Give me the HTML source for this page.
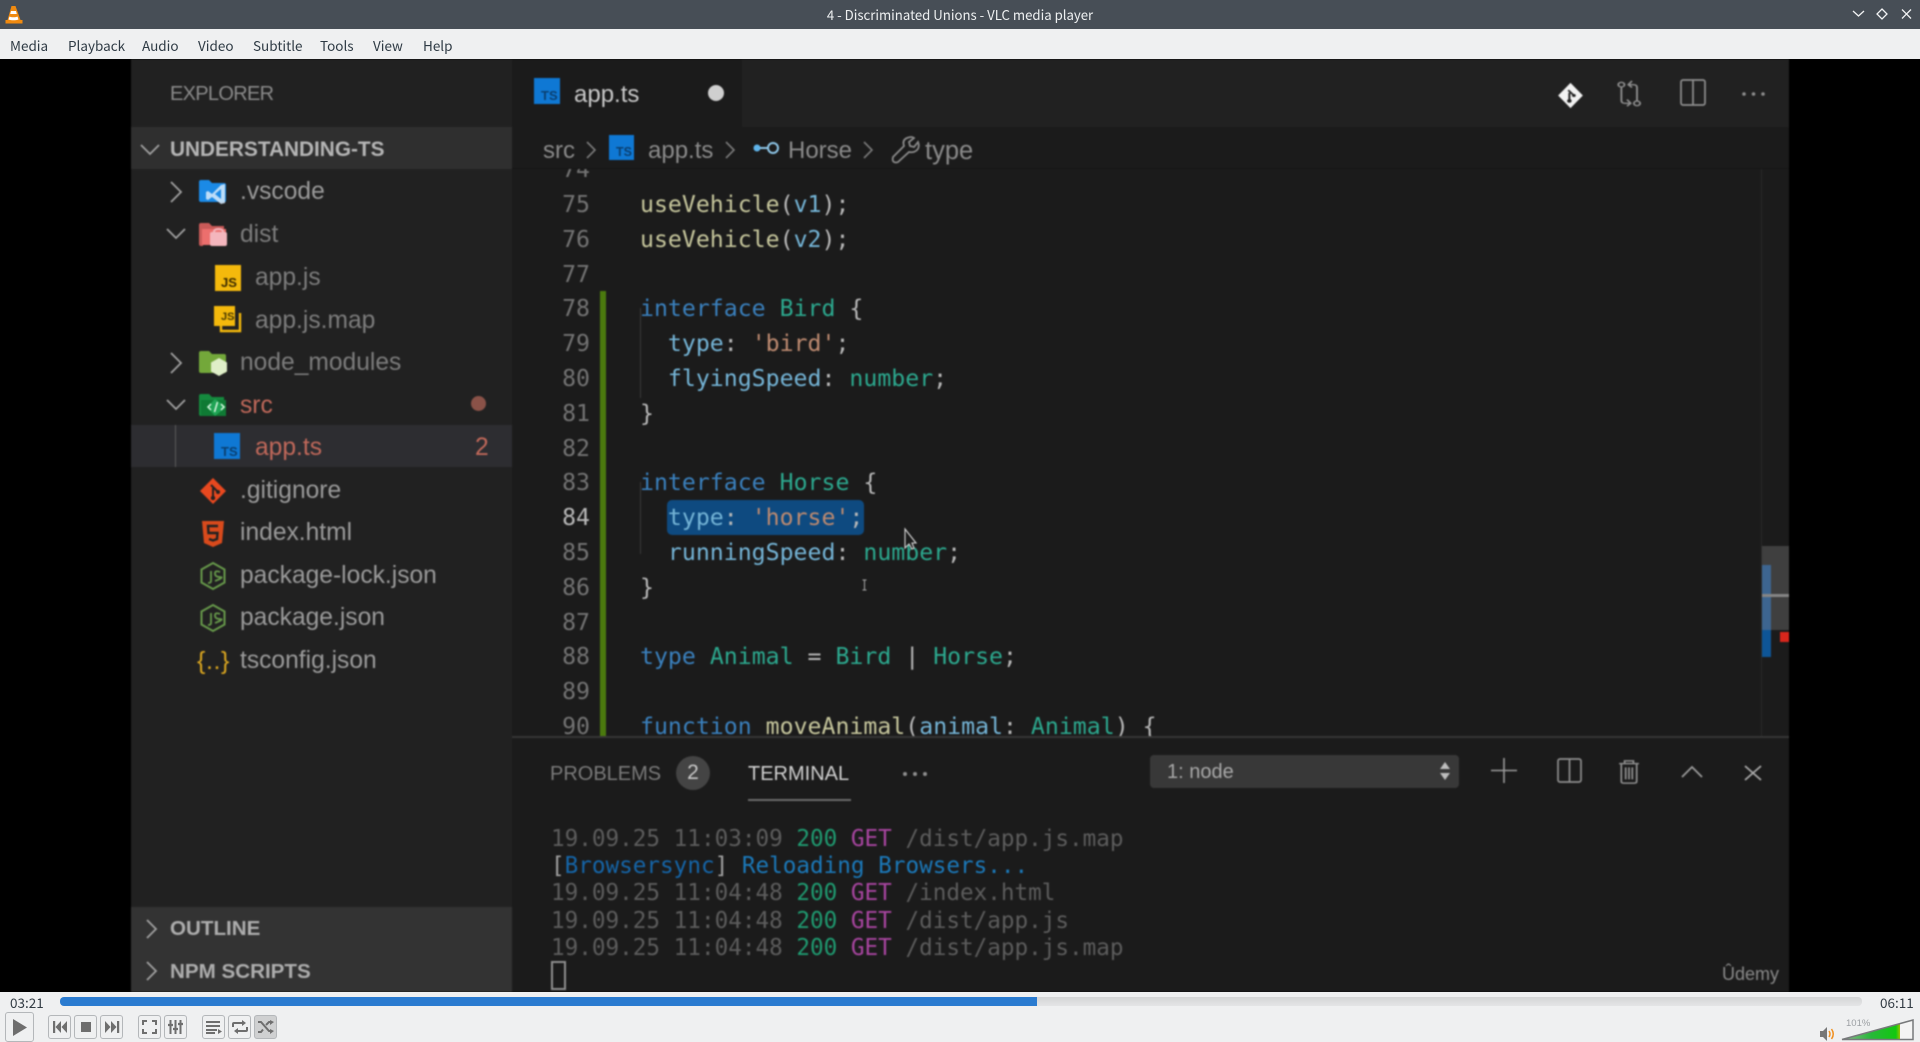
<!DOCTYPE html>
<html><head><meta charset="utf-8"><title>4 - Discriminated Unions - VLC media player</title>
<style>
html,body{margin:0;padding:0;background:#eff0f1;overflow:hidden}
body{width:1920px;height:1042px;position:relative;font-family:"Liberation Sans",sans-serif}
div,span.a,svg.a{position:absolute}
svg{position:absolute;overflow:visible}
.t{position:absolute;white-space:pre;line-height:40px;height:40px}
#inner .t,#inner>svg{transform:translateY(1px)}
#title{left:0;top:0;width:1920px;height:29px;background:#474e56}
#menu{left:0;top:29px;width:1920px;height:30px;background:#eff0f1}
.m{position:absolute;top:1px;line-height:30px;font-size:13.500px;color:#2e3a44;font-family:"Noto Sans CJK JP","Liberation Sans",sans-serif;white-space:pre}
#vid{left:0;top:59px;width:1920px;height:933px;background:#000;overflow:hidden}
#inner{left:0;top:-59px;width:1920px;height:1042px;filter:blur(.7px)}
.f{font-size:24.600px;color:#9a9a9a}
.code{font-family:"DejaVu Sans Mono","Liberation Mono",monospace;font-size:23.200px;line-height:34.800px;white-space:pre;color:#b8b8b8}
.fn{color:#c6c69c}.v{color:#74b4d6}.k{color:#3a80bd}.ty{color:#2ca88e}.s{color:#bd8a70}
.term{font-family:"DejaVu Sans Mono","Liberation Mono",monospace;font-size:22.650px;line-height:27.200px;white-space:pre;color:#5c5c5c}
.g{color:#1f9a70}.p{color:#a845a0}.b{color:#1b78b8}
.btn{position:absolute;top:1015px;width:23px;height:24px;box-sizing:border-box;border:1px solid #b4b7ba;border-radius:3px;background:#eff0f1}
</style></head><body>

<div id="title">
<svg style="left:5px;top:5px" width="18" height="20" viewBox="0 0 18 20"><path d="M6.500 1h4l5 14h2v3.500H.5V15h2z" fill="#f08a10"/><path d="M6 6h5l.8 3H5.200z" fill="#fff"/><path d="M4.500 11.500c2 1 6 1 8 0l1 3c-3 1-7 1-10 0z" fill="#fff"/></svg>
<span style="position:absolute;left:0;width:1920px;top:0;text-align:center;line-height:29px;font-size:13.200px;color:#eef0f1;font-family:'Noto Sans CJK JP','Liberation Sans',sans-serif">4 - Discriminated Unions - VLC media player</span>
<svg style="left:1850px;top:7px" width="70" height="16" viewBox="0 0 70 16" fill="none" stroke="#f2f3f4" stroke-width="1.300"><path d="M3 4l5.500 5L14 4"/><path d="M32 2l5 5-5 5-5-5z"/><path d="M52 2.500l9 9M61 2.500l-9 9"/></svg>
</div>

<div id="menu">
<span class="m" style="left:10px">Media</span><span class="m" style="left:68px">Playback</span><span class="m" style="left:142px">Audio</span><span class="m" style="left:198px">Video</span><span class="m" style="left:253px">Subtitle</span><span class="m" style="left:320px">Tools</span><span class="m" style="left:373px">View</span><span class="m" style="left:423px">Help</span>
</div>

<div id="vid"><div id="inner">
<!-- sidebar -->
<div style="left:131px;top:59px;width:381px;height:933px;background:#212121"></div>
<div style="left:131px;top:127px;width:381px;height:42px;background:#2f2f2f"></div>
<div style="left:131px;top:425px;width:381px;height:42px;background:#2d2d31"></div>
<div style="left:175px;top:425px;width:1px;height:42px;background:#5a5a5a"></div>
<div style="left:131px;top:907px;width:381px;height:85px;background:#333"></div>

<span class="t" style="left:170px;top:73px;font-size:20px;letter-spacing:-.7px;color:#8a8a8a">EXPLORER</span>
<span class="t" style="left:170px;top:129px;font-size:20.800px;font-weight:bold;color:#b5b5b5">UNDERSTANDING-TS</span>
<svg style="left:140px;top:140px" width="22" height="18" fill="none" stroke="#a0a0a0" stroke-width="1.800"><path d="M1 4l9 9 9-9"/></svg>

<!-- tree chevrons -->
<svg style="left:165px;top:170px" width="24" height="270" fill="none" stroke="#a0a0a0" stroke-width="1.800"><path d="M6 11l10 10L6 31"/><path d="M2 58l9 9 9-9"/><path d="M6 182l10 10-10 10"/><path d="M2 229l9 9 9-9"/></svg>

<!-- vscode folder -->
<svg style="left:198px;top:178px" width="30" height="26" viewBox="0 0 30 26"><path d="M1 3q0-2 2-2h8l3 3h12q2 0 2 2v16q0 1-2 1H3q-2 0-2-2z" fill="#1b8ae6"/><path d="M27 5v19l-4 1-9-7-4 3-2-1v-7l2-1 4 3 9-9z" fill="#cfe6fa" opacity=".9"/><path d="M23 10v10l-6-5z" fill="#1b8ae6"/></svg>
<span class="t f" style="left:240px;top:171px">.vscode</span>

<!-- dist folder -->
<svg style="left:198px;top:221px" width="30" height="26" viewBox="0 0 30 26"><path d="M1 3q0-2 2-2h8l3 3h12v4H6l-1 1v15H3q-2 0-2-2z" fill="#c95a58"/><path d="M4 7h24v16H4z" fill="#ec6f6d"/><rect x="12" y="10" width="17" height="14" rx="2" fill="#f4b6bd"/><path d="M16 10q0-3 4.500-3T25 10" fill="none" stroke="#f4b6bd" stroke-width="2"/></svg>
<span class="t f" style="left:240px;top:214px;color:#7c7c7c">dist</span>

<!-- app.js -->
<svg style="left:215px;top:264px" width="26" height="26" viewBox="0 0 24 24"><rect width="24" height="24" fill="#f4b90c"/></svg>
<span class="t" style="left:221px;top:268px;font-size:13px;font-weight:bold;color:#3a2a00;line-height:28px;height:28px">JS</span>
<span class="t f" style="left:255px;top:257px;color:#7c7c7c">app.js</span>

<!-- app.js.map -->
<svg style="left:214px;top:305px" width="28" height="27" viewBox="0 0 28 27"><path d="M7 7v18h19V7" fill="none" stroke="#f4b90c" stroke-width="2.400"/><rect width="21" height="20" x="0" y="0" fill="#f4b90c"/></svg>
<span class="t" style="left:221px;top:302px;font-size:11px;font-weight:bold;color:#4a3a00;line-height:28px;height:28px">JS</span>
<span class="t f" style="left:255px;top:300px;color:#7c7c7c">app.js.map</span>

<!-- node_modules -->
<svg style="left:198px;top:349px" width="30" height="26" viewBox="0 0 30 26"><path d="M1 3q0-2 2-2h8l3 3h12q2 0 2 2v16q0 1-2 1H3q-2 0-2-2z" fill="#73a83a"/><path d="M21 8l8 4.500v9L21 26l-8-4.500v-9z" fill="#dfeec8"/></svg>
<span class="t f" style="left:240px;top:342px;color:#7c7c7c">node_modules</span>

<!-- src -->
<svg style="left:198px;top:392px" width="30" height="26" viewBox="0 0 30 26"><path d="M1 3q0-2 2-2h8l3 3h12v3H5v16H3q-2 0-2-2z" fill="#158a3e"/><path d="M3 7h25v16H3z" fill="#0f7a34"/><path d="M17 6l11 8-11 9-8-9z" fill="#1fa455"/><path d="M13 11l-3 3 3 3M23 11l3 3-3 3M19.500 9l-3 10" fill="none" stroke="#d8f5df" stroke-width="1.500"/></svg>
<span class="t f" style="left:240px;top:385px;color:#c0685a">src</span>
<div style="left:471px;top:396px;width:15px;height:15px;border-radius:50%;background:#8a5248"></div>

<!-- app.ts -->
<div style="left:214px;top:433px;width:26px;height:26px;background:#0f78d4"></div>
<span class="t" style="left:221px;top:440px;font-size:13px;font-weight:bold;color:#0a3f70;line-height:22px;height:22px">TS</span>
<span class="t f" style="left:255px;top:427px;color:#c0685a">app.ts</span>
<span class="t f" style="left:475px;top:427px;color:#c0685a">2</span>

<!-- gitignore -->
<svg style="left:198px;top:475px" width="30" height="30" viewBox="0 0 30 30"><path d="M15 2l13 13-13 13L2 15z" fill="#e8481f"/><path d="M13 9l6 6M15 12v10" stroke="#212121" stroke-width="2" fill="none"/><circle cx="15" cy="22" r="2.200" fill="#212121"/><circle cx="20" cy="16" r="2" fill="#212121"/></svg>
<span class="t f" style="left:240px;top:470px">.gitignore</span>

<!-- html -->
<svg style="left:201px;top:519px" width="24" height="28" viewBox="0 0 24 28"><path d="M1 1h22l-2 22-9 4-9-4z" fill="#d94a1c"/><path d="M17 6H7l.5 7h9l-.5 6-4 1.500L8 19" fill="none" stroke="#212121" stroke-width="2.400"/></svg>
<span class="t f" style="left:240px;top:512px">index.html</span>

<!-- package-lock -->
<svg style="left:199px;top:560px" width="28" height="30" viewBox="0 0 28 30"><path d="M14 2l11.500 6.500v13L14 28 2.500 21.500v-13z" fill="none" stroke="#66984a" stroke-width="2"/><path d="M12 10v10q0 2-3 2" fill="none" stroke="#66984a" stroke-width="1.800"/><path d="M21 11q-5-2-5 1.500t5 3.500-5 4" fill="none" stroke="#66984a" stroke-width="1.800"/></svg>
<span class="t f" style="left:240px;top:555px">package-lock.json</span>

<!-- package -->
<svg style="left:199px;top:602px" width="28" height="30" viewBox="0 0 28 30"><path d="M14 2l11.500 6.500v13L14 28 2.500 21.500v-13z" fill="none" stroke="#66984a" stroke-width="2"/><path d="M12 10v10q0 2-3 2" fill="none" stroke="#66984a" stroke-width="1.800"/><path d="M21 11q-5-2-5 1.500t5 3.500-5 4" fill="none" stroke="#66984a" stroke-width="1.800"/></svg>
<span class="t f" style="left:240px;top:597px">package.json</span>

<!-- tsconfig -->
<span class="t" style="left:197px;top:640px;font-size:25px;color:#d9a520;letter-spacing:.6px">{..}</span>
<span class="t f" style="left:240px;top:640px">tsconfig.json</span>

<!-- outline / npm -->
<svg style="left:144px;top:915px" width="20" height="70" fill="none" stroke="#a0a0a0" stroke-width="1.800"><path d="M3 4l9 9-9 9"/><path d="M3 46l9 9-9 9"/></svg>
<span class="t" style="left:170px;top:908px;font-size:20.600px;font-weight:bold;color:#adadad">OUTLINE</span>
<span class="t" style="left:170px;top:951px;font-size:20.600px;font-weight:bold;color:#adadad">NPM SCRIPTS</span>

<!-- editor -->
<div style="left:512px;top:59px;width:1277px;height:933px;background:#1b1b1b"></div>
<div style="left:742px;top:59px;width:1047px;height:68px;background:#212121"></div>
<div style="left:512px;top:168px;width:1277px;height:1px;background:#151515"></div>

<!-- tab -->
<div style="left:534px;top:78px;width:26px;height:26px;background:#0f78d4"></div>
<span class="t" style="left:541px;top:84px;font-size:13px;font-weight:bold;color:#0a3f70;line-height:22px;height:22px">TS</span>
<span class="t" style="left:574px;top:74px;font-size:24px;color:#c8c8c8">app.ts</span>
<div style="left:708px;top:85px;width:16px;height:16px;border-radius:50%;background:#cfcfcf"></div>

<!-- top right actions -->
<svg style="left:1557px;top:81px" width="27" height="27" viewBox="0 0 24 30" preserveAspectRatio="none"><path d="M12 1l11 14-11 14L1 15z" fill="#f2f2f2"/><path d="M10 9l5 6M11 12v9" stroke="#212121" stroke-width="1.800"/><circle cx="11" cy="21" r="2" fill="#212121"/><circle cx="15" cy="15" r="1.700" fill="#212121"/></svg>
<svg style="left:1617px;top:79px" width="25" height="28" viewBox="0 0 20 30" preserveAspectRatio="none" fill="none" stroke="#8e8e8e" stroke-width="1.500"><circle cx="3.500" cy="5" r="2.500"/><circle cx="16" cy="25" r="2.500"/><path d="M3.500 8v14q0 3 3 3h4M8 21l3 4-3 3M16 22V8q0-3-3-3H9.500M12 1L9 5l3 3"/></svg>
<svg style="left:1680px;top:78px" width="26" height="27" fill="none" stroke="#8e8e8e" stroke-width="1.700"><rect x="1" y="1" width="24" height="25" rx="2"/><path d="M13 1v25"/></svg>
<svg style="left:1741px;top:90px" width="25" height="6" fill="#8e8e8e"><circle cx="3" cy="3" r="1.800"/><circle cx="12.500" cy="3" r="1.800"/><circle cx="22" cy="3" r="1.800"/></svg>

<!-- breadcrumb -->
<span class="t" style="left:543px;top:130px;font-size:24px;color:#8a8a8a">src</span>
<svg style="left:585px;top:139px" width="12" height="22" fill="none" stroke="#7a7a7a" stroke-width="1.600"><path d="M2 2l8 8-8 8"/></svg>
<div style="left:609px;top:135px;width:25px;height:25px;background:#0f78d4"></div>
<span class="t" style="left:616px;top:140px;font-size:12.500px;font-weight:bold;color:#0a3f70;line-height:22px;height:22px">TS</span>
<span class="t" style="left:648px;top:130px;font-size:24px;color:#8a8a8a">app.ts</span>
<svg style="left:724px;top:139px" width="12" height="22" fill="none" stroke="#7a7a7a" stroke-width="1.600"><path d="M2 2l8 8-8 8"/></svg>
<svg style="left:752px;top:139px" width="30" height="20" fill="none"><circle cx="5" cy="8" r="3.500" fill="#5fb4ea"/><path d="M8 8h8" stroke="#8fc8ea" stroke-width="2"/><circle cx="21" cy="8" r="5" stroke="#8fc8ea" stroke-width="2"/></svg>
<span class="t" style="left:788px;top:130px;font-size:24px;color:#8a8a8a">Horse</span>
<svg style="left:862px;top:139px" width="12" height="22" fill="none" stroke="#7a7a7a" stroke-width="1.600"><path d="M2 2l8 8-8 8"/></svg>
<svg style="left:890px;top:134px" width="30" height="30" viewBox="0 0 30 30" fill="none" stroke="#8a8a8a" stroke-width="1.800"><path d="M3 22l11-11q-2-6 3-8t7 0l-5 4 1 4 4 1 4-5q2 5-1 8t-8 2L8 27q-2 1-4 0t-1-5z"/></svg>
<span class="t" style="left:925px;top:130px;font-size:25.500px;color:#8a8a8a">type</span>

<!-- gutter + code -->
<div style="left:512px;top:169px;width:1277px;height:568px;overflow:hidden">
 <div style="left:88px;top:122px;width:6px;height:446px;background:#4b7a0e"></div>
 <div style="left:128px;top:139px;width:1px;height:90px;background:#3a3a3a"></div>
 <div style="left:128px;top:313px;width:1px;height:72px;background:#3a3a3a"></div>
 <div style="left:155px;top:331px;width:197px;height:35px;border-radius:5px;background:#0e4a80"></div>
 <div class="code" style="left:0;top:-15.800px;width:78px;text-align:right;color:#737373">74
75
76
77
78
79
80
81
82
83
<span style="color:#b8b8b8">84</span>
85
86
87
88
89
90</div>
 <div class="code" style="left:128px;top:-15.800px">
<span class="fn">useVehicle</span>(<span class="v">v1</span>);
<span class="fn">useVehicle</span>(<span class="v">v2</span>);

<span class="k">interface</span> <span class="ty">Bird</span> {
  <span class="v">type</span>: <span class="s">'bird'</span>;
  <span class="v">flyingSpeed</span>: <span class="ty">number</span>;
}

<span class="k">interface</span> <span class="ty">Horse</span> {
  <span class="v">type</span>: <span class="s">'horse'</span>;
  <span class="v">runningSpeed</span>: <span class="ty">number</span>;
}

<span class="k">type</span> <span class="ty">Animal</span> = <span class="ty">Bird</span> | <span class="ty">Horse</span>;

<span class="k">function</span> <span class="fn">moveAnimal</span>(<span class="v">animal</span>: <span class="ty">Animal</span>) {</div>
</div>

<!-- cursors -->
<svg style="left:904px;top:527px" width="12" height="24" viewBox="0 0 12 24"><path d="M1 1v19l4-4 3 5 2-1-2-5h4z" fill="#1b1b1b" stroke="#d8d8d8" stroke-width="1.100"/></svg>
<svg style="left:861px;top:578px" width="8" height="14" fill="none" stroke="#a8a8a8" stroke-width="1"><path d="M1.500 1h4M3.500 1v10M1.500 11h4"/></svg>

<!-- minimap / scrollbar -->
<div style="left:1761px;top:169px;width:1px;height:568px;background:#2a2a2a"></div>
<div style="left:1762px;top:546px;width:27px;height:84px;background:#3f3f3f"></div>
<div style="left:1762px;top:565px;width:9px;height:65px;background:#3d6590"></div>
<div style="left:1762px;top:630px;width:9px;height:27px;background:#0e5596"></div>
<div style="left:1762px;top:594px;width:27px;height:3px;background:#858585"></div>
<div style="left:1780px;top:632px;width:9px;height:10px;background:#d8261c"></div>

<!-- panel -->
<div style="left:512px;top:736px;width:1277px;height:2px;background:#363636"></div>
<span class="t" style="left:550px;top:753px;font-size:20px;color:#7a7a7a">PROBLEMS</span>
<div style="left:676px;top:756px;width:34px;height:34px;border-radius:50%;background:#444;color:#c8c8c8;font-size:21px;line-height:34px;text-align:center">2</div>
<span class="t" style="left:748px;top:753px;font-size:20px;color:#cfcfcf">TERMINAL</span>
<div style="left:748px;top:799px;width:103px;height:2px;background:#6a6a6a"></div>
<svg style="left:902px;top:770px" width="28" height="6" fill="#8e8e8e"><circle cx="3" cy="3" r="2"/><circle cx="13" cy="3" r="2"/><circle cx="23" cy="3" r="2"/></svg>
<div style="left:1150px;top:755px;width:309px;height:33px;border-radius:4px;background:#383838"></div>
<span class="t" style="left:1167px;top:751px;font-size:20px;color:#a8a8a8">1: node</span>
<svg style="left:1439px;top:760px" width="12" height="20" fill="#bdbdbd"><path d="M6 1l5 7H1zM6 19l5-7H1z"/></svg>
<svg style="left:1491px;top:757px" width="26" height="25" fill="none" stroke="#9a9a9a" stroke-width="1.600"><path d="M0 12.500h26M13 0v25"/></svg>
<svg style="left:1557px;top:757px" width="25" height="25" fill="none" stroke="#8e8e8e" stroke-width="1.700"><rect x="1" y="1" width="23" height="23" rx="2"/><path d="M12.500 1v23"/></svg>
<svg style="left:1618px;top:758px" width="22" height="25" viewBox="0 0 20 27" preserveAspectRatio="none" fill="none" stroke="#8e8e8e" stroke-width="1.600"><path d="M1 5h18M6 5V2h8v3M3 5v19q0 2 2 2h10q2 0 2-2V5M7 9v13M10 9v13M13 9v13"/></svg>
<svg style="left:1681px;top:764px" width="22" height="14" fill="none" stroke="#9a9a9a" stroke-width="1.800"><path d="M1 12l10-10 10 10"/></svg>
<svg style="left:1744px;top:764px" width="18" height="16" fill="none" stroke="#a8a8a8" stroke-width="1.800"><path d="M1 1l16 14M17 1L1 15"/></svg>

<!-- terminal -->
<div class="term" style="left:551px;top:826px"><span>19.09.25 11:03:09 </span><span class="g">200</span> <span class="p">GET</span> /dist/app.js.map
<span style="color:#a0a0a0">[</span><span style="color:#1565a8">Browsersync</span><span style="color:#a0a0a0">]</span> <span class="b">Reloading Browsers...</span>
19.09.25 11:04:48 <span class="g">200</span> <span class="p">GET</span> /index.html
19.09.25 11:04:48 <span class="g">200</span> <span class="p">GET</span> /dist/app.js
19.09.25 11:04:48 <span class="g">200</span> <span class="p">GET</span> /dist/app.js.map</div>
<div style="left:551px;top:961px;width:11px;height:25px;border:2px solid #8e8e8e"></div>

<span class="t" style="left:1722px;top:953px;font-size:18px;color:#8a8a8a">Ûdemy</span>
</div></div>

<!-- controls -->
<div style="left:0;top:992px;width:1920px;height:50px;background:#eff0f1"></div>
<span class="t" style="left:10px;top:992px;height:20px;line-height:20px;font-size:13.500px;color:#333c44;font-family:'Noto Sans CJK JP','Liberation Sans',sans-serif">03:21</span>
<span class="t" style="left:1880px;top:992px;height:20px;line-height:20px;font-size:13.500px;color:#333c44;font-family:'Noto Sans CJK JP','Liberation Sans',sans-serif">06:11</span>
<div style="left:60px;top:997px;width:1802px;height:9px;border-radius:4px;background:linear-gradient(#d4d5d6,#e4e5e6)"></div>
<div style="left:60px;top:997px;width:977px;height:9px;border-radius:4px 0 0 4px;background:#2a7bd0"></div>

<!-- play -->
<div class="btn" style="left:5px;top:1012px;width:29px;height:30px"></div>
<svg style="left:12px;top:1018px" width="16" height="19"><path d="M1 1l14 8.500L1 18z" fill="#6e6e6e"/></svg>

<div class="btn" style="left:48px"></div>
<svg style="left:52px;top:1021px" width="16" height="12" fill="#6e6e6e"><path d="M1 0h2.200v12H1zM9 0v12L3.500 6zM15 0v12L9.500 6z"/></svg>
<div class="btn" style="left:74px"></div>
<div style="left:81px;top:1022px;width:10px;height:10px;background:#6e6e6e"></div>
<div class="btn" style="left:100px"></div>
<svg style="left:104px;top:1021px" width="16" height="12" fill="#6e6e6e"><path d="M1 0l5.500 6L1 12zM7 0l5.500 6L7 12zM13 0h2.200v12H13z"/></svg>

<div class="btn" style="left:138px"></div>
<svg style="left:142px;top:1020px" width="15" height="14" fill="none" stroke="#6e6e6e" stroke-width="2"><path d="M1 5V1h4M10 1h4v4M14 9v4h-4M5 13H1V9"/></svg>
<div class="btn" style="left:164px"></div>
<svg style="left:168px;top:1020px" width="15" height="14" fill="none" stroke="#6e6e6e" stroke-width="2"><path d="M2.500 0v14M7.500 0v14M12.500 0v14"/><path d="M0 5h5M5 9h5M10 4h5" stroke-width="2.200"/></svg>

<div class="btn" style="left:202px"></div>
<svg style="left:206px;top:1021px" width="16" height="13" fill="#6e6e6e"><path d="M0 0h14v2H0zM0 4h14v2H0zM0 8h11v2H0zM0 11h9v2H0zM12 8l4 2.500-4 2.500z"/></svg>
<div class="btn" style="left:228px"></div>
<svg style="left:232px;top:1020px" width="16" height="14" fill="none" stroke="#6e6e6e" stroke-width="2"><path d="M1 7V4q0-1 1-1h9M15 7v3q0 1-1 1H5"/><path d="M10 0l4 3-4 3zM6 8l-4 3 4 3z" fill="#6e6e6e" stroke="none"/></svg>
<div class="btn" style="left:254px;background:#cfd0d1"></div>
<svg style="left:258px;top:1020px" width="16" height="14" fill="none" stroke="#6e6e6e" stroke-width="2"><path d="M0 2h3l8 9h2M0 12h3l2-2.500M8 5l3-3h2"/><path d="M12 0l4 2-4 3zM12 9l4 2-4 3z" fill="#6e6e6e" stroke="none"/></svg>

<!-- volume -->
<svg style="left:1820px;top:1026px" width="16" height="16" viewBox="0 0 16 16"><path d="M0 5h3l4-4v14l-4-4H0z" fill="#777"/><path d="M9 5q2 3 0 6M11.500 3q3.500 5 0 10" fill="none" stroke="#f09020" stroke-width="1.500"/></svg>
<span class="t" style="left:1846px;top:1016px;height:16px;line-height:16px;font-size:9.500px;color:#9ca0a4">101%</span>
<svg style="left:1840px;top:1018px" width="76" height="24" viewBox="0 0 76 24"><defs><linearGradient id="gv" x1="0" x2="1" y1="0" y2="0"><stop offset="0" stop-color="#8fb98f"/><stop offset=".5" stop-color="#28b83a"/><stop offset=".93" stop-color="#12c810"/><stop offset="1" stop-color="#9ac400"/></linearGradient></defs><path d="M2 21.500L73 2v19.500z" fill="#f4f4f4"/><path d="M2 21.500L60 5.600v15.900z" fill="url(#gv)"/><path d="M2 21.500L73 2v19.500z" fill="none" stroke="#77797b" stroke-width="1.500"/></svg>

</body></html>
